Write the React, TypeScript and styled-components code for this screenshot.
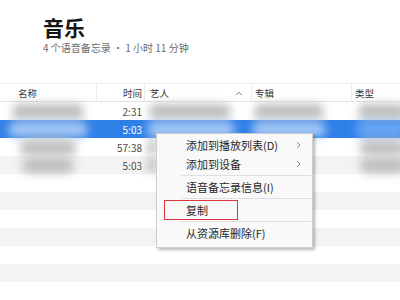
import styled, { createGlobalStyle, css } from "styled-components";

const GlobalStyle = createGlobalStyle`
  html, body {
    margin: 0;
    padding: 0;
    background: #ffffff;
  }
  body {
    font-family: "Noto Sans CJK SC", "Noto Sans", sans-serif;
  }
`;

type Blur = { w: number; x: number; c: string };
type Track = {
  time: string;
  name?: Blur;
  artist?: Blur;
  album?: Blur;
  kind?: Blur;
};

const GRAY = "#bdbdbd";
const PALE = "#a6c9f5";

const tracks: Track[] = [
  {
    time: "2:31",
    name: { w: 72, x: 12, c: GRAY },
    artist: { w: 82, x: 4, c: GRAY },
    album: { w: 70, x: 2, c: GRAY },
    kind: { w: 50, x: 6, c: GRAY },
  },
  {
    time: "5:03",
    name: { w: 80, x: 8, c: PALE },
    artist: { w: 88, x: 2, c: PALE },
    album: { w: 74, x: 0, c: PALE },
    kind: { w: 52, x: 4, c: "#6aa9f5" },
  },
  {
    time: "57:38",
    name: { w: 56, x: 20, c: GRAY },
    artist: { w: 10, x: 2, c: GRAY },
    kind: { w: 46, x: 8, c: GRAY },
  },
  {
    time: "5:03",
    name: { w: 52, x: 22, c: GRAY },
    artist: { w: 10, x: 2, c: GRAY },
    kind: { w: 46, x: 8, c: GRAY },
  },
];

const EMPTY_ROWS = 7;

function App() {
  return (
    <Page>
      <GlobalStyle />
      <Header>
        <Title>音乐</Title>
        <Subtitle>4 个语音备忘录 • 1 小时 11 分钟</Subtitle>
      </Header>

      <HeadRow>
        <HeadCell $pad="0 0 0 18px">名称</HeadCell>
        <HeadCell $pad="0 2px 0 0" $right>
          时间
        </HeadCell>
        <HeadCell $pad="0 0 0 5px">
          艺人
          <SortCaret viewBox="0 0 8 5" width="8" height="5">
            <path d="M1 4.2 L4 1.2 L7 4.2" fill="none" stroke="#777" strokeWidth="1" />
          </SortCaret>
        </HeadCell>
        <HeadCell $pad="0 0 0 3px">专辑</HeadCell>
        <HeadCell $pad="0 0 0 3px" $last>
          类型
        </HeadCell>
      </HeadRow>

      {tracks.map((t, i) => (
        <Row key={i} $striped={i % 2 === 1} $selected={i === 1}>
          <Cell>{t.name && <Smudge $w={t.name.w} $x={t.name.x} $c={t.name.c} />}</Cell>
          <TimeCell $selected={i === 1}>{t.time}</TimeCell>
          <Cell>{t.artist && <Smudge $w={t.artist.w} $x={t.artist.x} $c={t.artist.c} />}</Cell>
          <Cell>{t.album && <Smudge $w={t.album.w} $x={t.album.x} $c={t.album.c} />}</Cell>
          <Cell>{t.kind && <Smudge $w={t.kind.w} $x={t.kind.x} $c={t.kind.c} />}</Cell>
        </Row>
      ))}
      {Array.from({ length: EMPTY_ROWS }).map((_, i) => (
        <Row key={`e${i}`} $striped={(i + tracks.length) % 2 === 1} />
      ))}

      <Menu>
        <MenuItem>
          添加到播放列表(D)
          <Chevron />
        </MenuItem>
        <MenuItem>
          添加到设备
          <Chevron />
        </MenuItem>
        <Separator />
        <MenuItem>语音备忘录信息(I)</MenuItem>
        <Separator />
        <MenuItem $marked>复制</MenuItem>
        <Separator />
        <MenuItem>从资源库删除(F)</MenuItem>
      </Menu>
    </Page>
  );
}

function Chevron() {
  return (
    <ChevronIcon viewBox="0 0 5 8" width="5" height="8">
      <path d="M1 1 L4 4 L1 7" fill="none" stroke="#888" strokeWidth="1" />
    </ChevronIcon>
  );
}

export default App;

const COLS = "97px 48px 107px 100px 1fr";

const Page = styled.div`
  position: relative;
  width: 400px;
  height: 300px;
  overflow: hidden;
  background: #ffffff;
`;

const Header = styled.div`
  box-sizing: border-box;
  height: 83px;
  padding: 13px 0 0 43px;
`;

const Title = styled.h1`
  margin: 0;
  font-size: 21px;
  line-height: 28px;
  font-weight: 700;
  color: #151515;
`;

const Subtitle = styled.p`
  margin: 0;
  font-size: 10px;
  line-height: 14px;
  color: #6a6a6a;
`;

const HeadRow = styled.div`
  box-sizing: border-box;
  display: grid;
  grid-template-columns: ${COLS};
  height: 19px;
  border-top: 1px solid #ececec;
  border-bottom: 1px solid #e2e2e2;
`;

const HeadCell = styled.div<{ $pad: string; $right?: boolean; $last?: boolean }>`
  display: flex;
  align-items: center;
  justify-content: ${(p) => (p.$right ? "flex-end" : "flex-start")};
  padding: ${(p) => p.$pad};
  font-size: 9.5px;
  color: #333;
  border-right: ${(p) => (p.$last ? "none" : "1px solid #ebebeb")};
  position: relative;
`;

const SortCaret = styled.svg`
  position: absolute;
  right: 8px;
  top: 7px;
`;

const Row = styled.div<{ $striped?: boolean; $selected?: boolean }>`
  display: grid;
  grid-template-columns: ${COLS};
  height: 18px;
  background: ${(p) => (p.$selected ? "#2f7fe8" : p.$striped ? "#f3f3f3" : "#ffffff")};
`;

const Cell = styled.div`
  display: flex;
  align-items: center;
  overflow: visible;
`;

const TimeCell = styled.div<{ $selected?: boolean }>`
  display: flex;
  align-items: center;
  justify-content: flex-end;
  padding-right: 3px;
  font-size: 10px;
  color: ${(p) => (p.$selected ? "#ffffff" : "#4a4a4a")};
`;

const Smudge = styled.div<{ $w: number; $x: number; $c: string }>`
  width: ${(p) => p.$w}px;
  margin-left: ${(p) => p.$x}px;
  height: 15px;
  border-radius: 7px;
  background: ${(p) => p.$c};
  filter: blur(5px);
`;

const Menu = styled.div`
  position: absolute;
  left: 156px;
  top: 133px;
  width: 157px;
  box-sizing: border-box;
  padding: 1px 1px 5px;
  background: #f9f9f9;
  border: 1px solid #cfcfcf;
  box-shadow: 2px 2px 3px rgba(0, 0, 0, 0.28);
`;

const MenuItem = styled.div<{ $marked?: boolean }>`
  position: relative;
  display: flex;
  align-items: center;
  justify-content: space-between;
  height: 19px;
  padding: 0 10px 0 28px;
  font-size: 11px;
  color: #262626;

  ${(p) =>
    p.$marked &&
    css`
      &::after {
        content: "";
        position: absolute;
        left: 6px;
        top: 0;
        width: 74px;
        height: 20px;
        box-sizing: border-box;
        border: 1.5px solid #d9363e;
      }
    `}
`;

const ChevronIcon = styled.svg`
  display: block;
`;

const Separator = styled.div`
  height: 4px;
  display: flex;
  align-items: center;
  padding-left: 23px;

  &::before {
    content: "";
    flex: 1;
    height: 1px;
    background: #dedede;
  }
`;
